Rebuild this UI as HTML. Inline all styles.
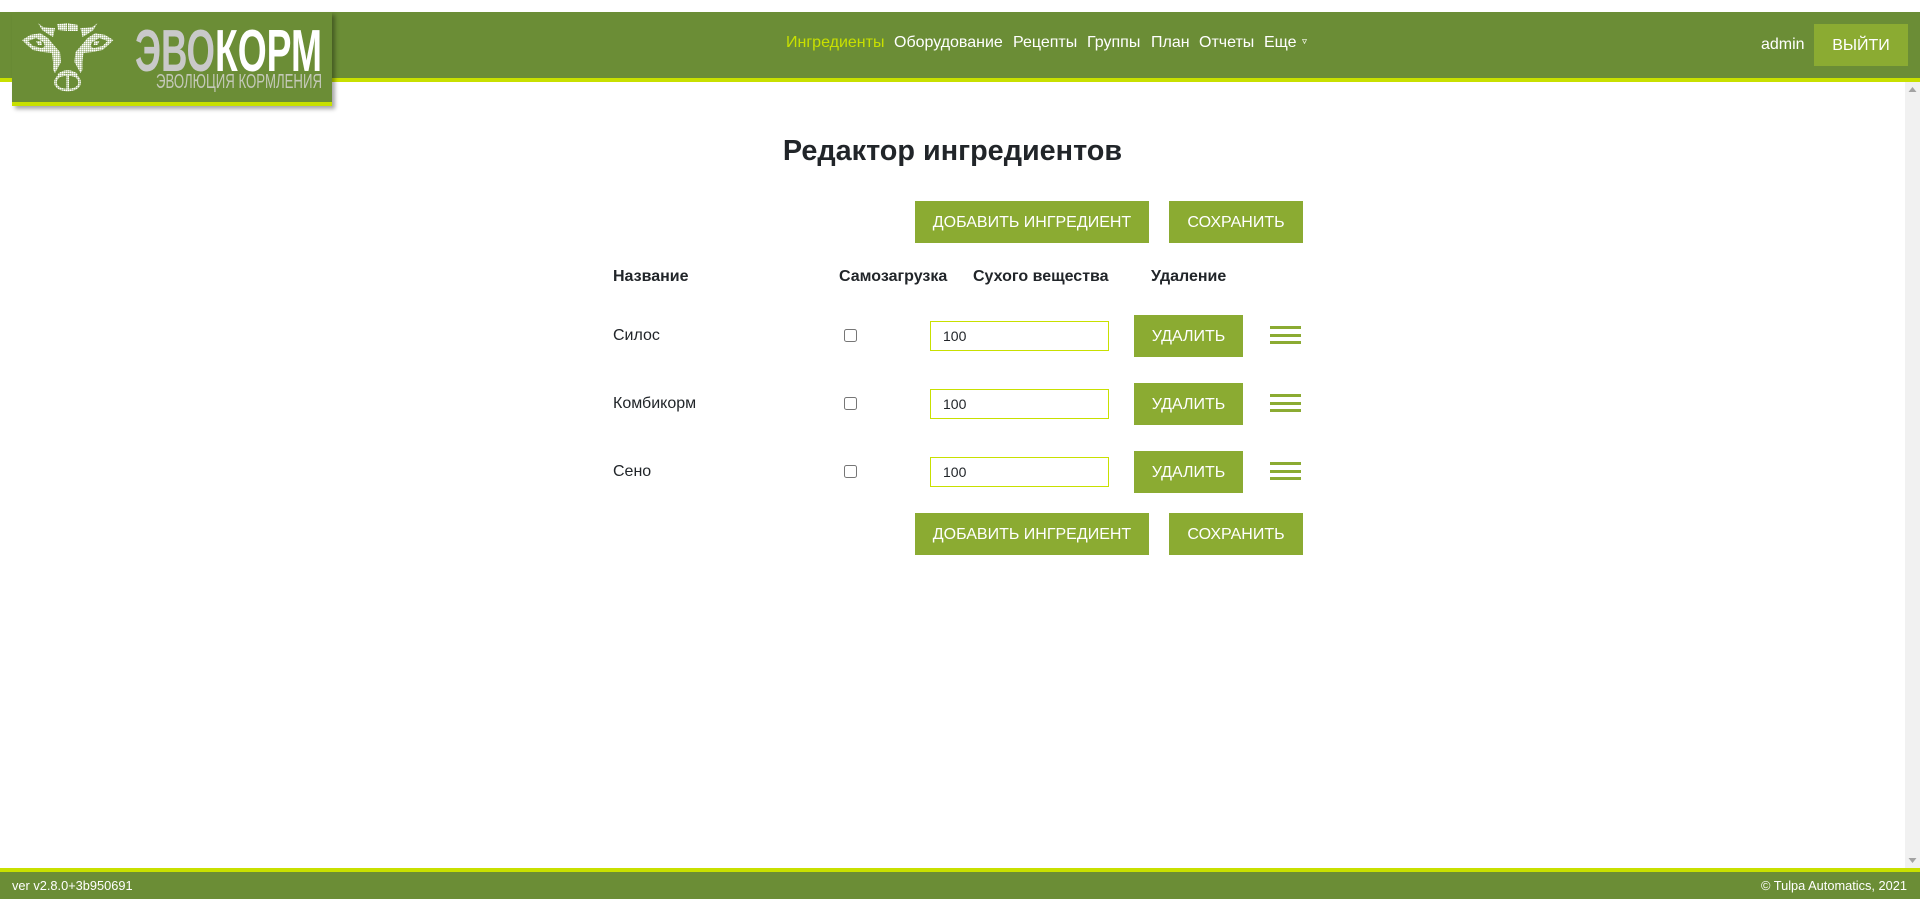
<!DOCTYPE html>
<html lang="ru"><head><meta charset="utf-8"><title>Редактор ингредиентов</title>
<style>
html,body{margin:0;padding:0;width:1920px;height:899px;overflow:hidden;background:#fff}
body{font-family:"Liberation Sans",Arial,sans-serif;font-size:16px;color:#212529;position:relative}
.a{position:absolute;white-space:nowrap}
.hdr{left:0;top:12px;width:1920px;height:66px;background:#6b8d36}
.lime{background:#c8e000}
.nav{top:33px;line-height:20px;color:#fff}
.btn{position:absolute;background:#8bab32;color:#fff;text-align:center;height:42px;line-height:44px;font-size:16px}
.th{font-weight:bold;line-height:20px;top:267px}
.td{line-height:20px;left:613px}
.inp{position:absolute;left:930px;width:179px;height:30px;box-sizing:border-box;border:1px solid #c8e000;background:#fff;padding:0 0 0 12px;font:14px "Liberation Sans",Arial,sans-serif;color:#212529;outline:0;margin:0}
.cb{position:absolute;left:844px;width:13px;height:13px;margin:0}
.bar{position:absolute;left:1270px;width:31px;height:3px;background:#8bab32}
.foot{top:878px;line-height:16px;font-size:12.8px;color:#fff}
</style></head><body>
<div class="a hdr"></div>
<div class="a lime" style="left:0;top:78px;width:1920px;height:4px"></div>

<div class="a" style="left:12px;top:12px;width:320px;height:94px;background:#6b8d36;box-shadow:3px 3px 4px rgba(0,0,0,.35)">
<div class="a lime" style="left:0;bottom:0;width:320px;height:4px"></div>
</div>
<svg class="a" style="left:0;top:0" width="340" height="110" viewBox="0 0 340 110">
<defs>
<pattern id="d" width="2" height="2" patternUnits="userSpaceOnUse"><rect width="1.65" height="1.65" fill="#fff"/></pattern>
<g id="half">
<path d="M38 23L43 27L55 28L53 37L48 34L42 30Z" fill="url(#d)"/>
<path fill-rule="evenodd" fill="url(#d)" d="M22 40L30 35L40 33L48 38L52 43L60 52L61 62L55 73L53 70L53 62L52 53L43 52L33 50L27 45ZM28 41L33 46L42 48L45 46L43 42L36 38Z"/>
<path d="M36 41L41 41L42 45L38 45Z" fill="url(#d)"/>
</g>
</defs>
<path d="M57 24L67 23L67 31L58 30ZM68 23L78 25L78 31L68 31Z" fill="url(#d)"/>
<use href="#half"/>
<use href="#half" transform="translate(135.4,0) scale(-1,1)"/>
<path d="M58 75Q67.7 68 77 75" fill="none" stroke="url(#d)" stroke-width="2.6"/>
<path d="M59 76Q54 80 56 85Q59 90 67.7 90Q76 90 79 85Q81 80 76 76Q67.7 73 59 76Z" fill="none" stroke="url(#d)" stroke-width="2.6"/>
<path d="M67.7 75V90" fill="none" stroke="url(#d)" stroke-width="2.6"/>
<text x="135" y="71" font-family="Liberation Sans" font-weight="bold" font-size="59" fill="#c9c9c9" textLength="80" lengthAdjust="spacingAndGlyphs">ЭВО</text>
<text x="215" y="71" font-family="Liberation Sans" font-weight="bold" font-size="59" fill="#fff" textLength="107" lengthAdjust="spacingAndGlyphs">КОРМ</text>
<text x="156" y="88" font-family="Liberation Sans" font-size="20" fill="#c4c9b8" textLength="166" lengthAdjust="spacingAndGlyphs">ЭВОЛЮЦИЯ КОРМЛЕНИЯ</text>
</svg>

<div class="a nav" style="left:786px;color:#c8e000">Ингредиенты</div>
<div class="a nav" style="left:894px">Оборудование</div>
<div class="a nav" style="left:1013px">Рецепты</div>
<div class="a nav" style="left:1087px">Группы</div>
<div class="a nav" style="left:1151px">План</div>
<div class="a nav" style="left:1199px">Отчеты</div>
<div class="a nav" style="left:1264px">Еще</div>
<svg class="a" style="left:1302px;top:39px" width="5" height="5" viewBox="0 0 5 5"><path d="M.5 .5H4.5L2.5 4.5Z" fill="none" stroke="#e6ecd8" stroke-width=".8"/></svg>
<div class="a nav" style="left:1761px;top:35px">admin</div>
<div class="btn" style="left:1814px;top:24px;width:94px">ВЫЙТИ</div>

<div class="a" style="left:1905px;top:82px;width:15px;height:786px;background:#f1f1f1"></div>
<svg class="a" style="left:1905px;top:82px" width="15" height="15"><path d="M7.5 5L11.5 10H3.5Z" fill="#a3a3a3"/></svg>
<svg class="a" style="left:1905px;top:853px" width="15" height="15"><path d="M3.5 5H11.5L7.5 10Z" fill="#a3a3a3"/></svg>

<div class="a" style="left:0;width:1905px;top:134px;text-align:center;font-weight:bold;font-size:28.8px;line-height:34px">Редактор ингредиентов</div>

<div class="btn" style="left:915px;top:201px;width:234px">ДОБАВИТЬ ИНГРЕДИЕНТ</div>
<div class="btn" style="left:1169px;top:201px;width:134px">СОХРАНИТЬ</div>

<div class="a th" style="left:613px">Название</div>
<div class="a th" style="left:839px">Самозагрузка</div>
<div class="a th" style="left:973px">Сухого вещества</div>
<div class="a th" style="left:1151px">Удаление</div>

<div class="a td" style="top:326px">Силос</div>
<input class="cb" type="checkbox" style="top:329px">
<input class="inp" type="text" value="100" style="top:321px">
<div class="btn" style="left:1134px;top:315px;width:109px">УДАЛИТЬ</div>
<div class="bar" style="top:326px"></div><div class="bar" style="top:334px"></div><div class="bar" style="top:341px"></div>

<div class="a td" style="top:394px">Комбикорм</div>
<input class="cb" type="checkbox" style="top:397px">
<input class="inp" type="text" value="100" style="top:389px">
<div class="btn" style="left:1134px;top:383px;width:109px">УДАЛИТЬ</div>
<div class="bar" style="top:394px"></div><div class="bar" style="top:402px"></div><div class="bar" style="top:409px"></div>

<div class="a td" style="top:462px">Сено</div>
<input class="cb" type="checkbox" style="top:465px">
<input class="inp" type="text" value="100" style="top:457px">
<div class="btn" style="left:1134px;top:451px;width:109px">УДАЛИТЬ</div>
<div class="bar" style="top:462px"></div><div class="bar" style="top:470px"></div><div class="bar" style="top:477px"></div>

<div class="btn" style="left:915px;top:513px;width:234px">ДОБАВИТЬ ИНГРЕДИЕНТ</div>
<div class="btn" style="left:1169px;top:513px;width:134px">СОХРАНИТЬ</div>

<div class="a lime" style="left:0;top:868px;width:1920px;height:4px"></div>
<div class="a" style="left:0;top:872px;width:1920px;height:27px;background:#6b8d36"></div>
<div class="a foot" style="left:12px">ver v2.8.0+3b950691</div>
<div class="a foot" style="right:13px">© Tulpa Automatics, 2021</div>
</body></html>
